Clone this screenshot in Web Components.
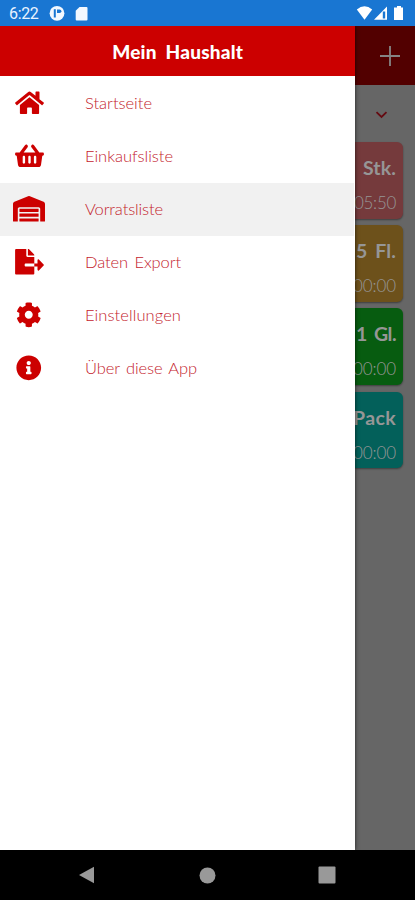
<!DOCTYPE html>
<html lang="de"><head><meta charset="utf-8"><title>Mein Haushalt</title>
<style>html,body{margin:0;height:100%;overflow:hidden}</style></head><body>
<phone-screen></phone-screen>
<script>
const define=(name,html,after)=>customElements.define(name,class extends HTMLElement{
  connectedCallback(){
    if(this.shadowRoot)return;
    const t=document.createElement('template');
    t.innerHTML=typeof html==='function'?html(this):html;
    this.attachShadow({mode:'open'}).append(t.content.cloneNode(true));
    if(after)after(this);
  }
});
const ICONS={
home:['0 0 576 512',29,'M280.37 148.26L96 300.11V464a16 16 0 0 0 16 16l112.06-.29a16 16 0 0 0 15.92-16V368a16 16 0 0 1 16-16h64a16 16 0 0 1 16 16v95.64a16 16 0 0 0 16 16.05L464 480a16 16 0 0 0 16-16V300L295.67 148.26a12.19 12.19 0 0 0-15.3 0zM571.6 251.47L488 182.56V44.05a12 12 0 0 0-12-12h-56a12 12 0 0 0-12 12v72.61L318.47 43a48 48 0 0 0-61 0L4.34 251.47a12 12 0 0 0-1.6 16.9l25.5 31A12 12 0 0 0 45.15 301l235.22-193.74a12.19 12.19 0 0 1 15.3 0L530.9 301a12 12 0 0 0 16.9-1.6l25.5-31a12 12 0 0 0-1.7-16.93z'],
basket:['0 0 576 512',29,'M576 216v16c0 13.255-10.745 24-24 24h-8l-26.113 182.788C514.509 462.435 494.257 480 470.37 480H105.63c-23.887 0-44.139-17.565-47.518-41.212L32 256h-8c-13.255 0-24-10.745-24-24v-16c0-13.255 10.745-24 24-24h67.341l106.78-146.821c10.395-14.292 30.407-17.453 44.701-7.058 14.293 10.395 17.453 30.408 7.058 44.701L170.477 192h235.046L326.12 82.821c-10.395-14.292-7.234-34.306 7.059-44.701 14.291-10.395 34.306-7.235 44.701 7.058L484.659 192H552c13.255 0 24 10.745 24 24zM312 392V280c0-13.255-10.745-24-24-24s-24 10.745-24 24v112c0 13.255 10.745 24 24 24s24-10.745 24-24zm112 0V280c0-13.255-10.745-24-24-24s-24 10.745-24 24v112c0 13.255 10.745 24 24 24s24-10.745 24-24zm-224 0V280c0-13.255-10.745-24-24-24s-24 10.745-24 24v112c0 13.255 10.745 24 24 24s24-10.745 24-24z'],
warehouse:['0 0 640 512',32,'M504 352H136.4c-4.4 0-8 3.6-8 8l-.1 48c0 4.4 3.6 8 8 8H504c4.4 0 8-3.6 8-8v-48c0-4.4-3.6-8-8-8zm0 96H136.1c-4.4 0-8 3.6-8 8l-.1 48c0 4.4 3.6 8 8 8h368c4.4 0 8-3.6 8-8v-48c0-4.4-3.6-8-8-8zm0-192H136.6c-4.4 0-8 3.6-8 8l-.1 48c0 4.4 3.6 8 8 8H504c4.4 0 8-3.6 8-8v-48c0-4.4-3.6-8-8-8zm106.5-139L338.4 3.7a48.15 48.15 0 0 0-36.9 0L29.5 117C11.7 124.5 0 141.9 0 161.3V504c0 4.4 3.6 8 8 8h80c4.4 0 8-3.6 8-8V256c0-17.6 14.6-32 32.6-32h382.8c18 0 32.6 14.4 32.6 32v248c0 4.4 3.6 8 8 8h80c4.4 0 8-3.6 8-8V161.3c0-19.4-11.7-36.8-29.5-44.3z'],
export:['0 0 576 512',29,'M384 121.9c0-6.3-2.5-12.4-7-16.9L279.1 7c-4.5-4.5-10.6-7-17-7H256v128h128zM571 308l-95.7-96.4c-10.1-10.1-27.4-3-27.4 11.3V288h-64v64h64v65.2c0 14.3 17.3 21.4 27.4 11.3L571 332c6.6-6.6 6.6-17.4 0-24zm-379 28v-32c0-8.8 7.2-16 16-16h176V160H248c-13.2 0-24-10.8-24-24V0H24C10.7 0 0 10.7 0 24v464c0 13.3 10.7 24 24 24h336c13.3 0 24-10.7 24-24V352H208c-8.8 0-16-7.2-16-16z'],
cog:['0 0 512 512',25.5,'M487.4 315.7l-42.6-24.6c4.3-23.2 4.3-47 0-70.2l42.6-24.6c4.9-2.8 7.1-8.6 5.5-14-11.1-35.6-30-67.8-54.7-94.6-3.8-4.1-10-5.1-14.8-2.3L380.8 110c-17.9-15.4-38.5-27.3-60.8-35.1V25.8c0-5.6-3.9-10.5-9.4-11.7-36.7-8.2-74.3-7.8-109.2 0-5.5 1.2-9.4 6.1-9.4 11.7V75c-22.2 7.9-42.8 19.8-60.8 35.1L88.7 85.5c-4.9-2.8-11-1.9-14.8 2.3-24.7 26.7-43.6 58.9-54.7 94.6-1.7 5.4.6 11.2 5.5 14L67.3 221c-4.3 23.2-4.3 47 0 70.2l-42.6 24.6c-4.9 2.8-7.1 8.6-5.5 14 11.1 35.6 30 67.8 54.7 94.6 3.8 4.1 10 5.1 14.8 2.3l42.6-24.6c17.9 15.4 38.5 27.3 60.8 35.1v49.2c0 5.6 3.9 10.5 9.4 11.7 36.7 8.2 74.3 7.8 109.2 0 5.5-1.2 9.4-6.1 9.4-11.7v-49.2c22.2-7.9 42.8-19.8 60.8-35.1l42.6 24.6c4.9 2.8 11 1.9 14.8-2.3 24.7-26.7 43.6-58.9 54.7-94.6 1.5-5.5-.7-11.3-5.6-14.1zM256 336c-44.1 0-80-35.9-80-80s35.9-80 80-80 80 35.9 80 80-35.9 80-80 80z'],
info:['0 0 512 512',25.5,'M256 8C119.043 8 8 119.083 8 256c0 136.997 111.043 248 248 248s248-111.003 248-248C504 119.083 392.957 8 256 8zm0 110c23.196 0 42 18.804 42 42s-18.804 42-42 42-42-18.804-42-42 18.804-42 42-42zm56 254c0 6.627-5.373 12-12 12h-88c-6.627 0-12-5.373-12-12v-24c0-6.627 5.373-12 12-12h12v-64h-12c-6.627 0-12-5.373-12-12v-24c0-6.627 5.373-12 12-12h64c6.627 0 12 5.373 12 12v100h12c6.627 0 12 5.373 12 12v24z']
};
/* Text run tracked out to a given width */
define('fit-text',`<style>:host{display:inline-block;white-space:pre}</style><span><slot></slot></span>`,el=>{
  const s=el.shadowRoot.querySelector('span'),w=+el.getAttribute('width'),n=el.textContent.length;
  s.style.letterSpacing=((w-s.getBoundingClientRect().width)/n)+'px';
});
define('status-bar',`<style>
:host{display:flex;align-items:center;height:26px;box-sizing:border-box;background:#1976d2;color:#e9f3ff;font:400 16px/26px Roboto,sans-serif;padding:0 11px 0 9px}
fit-text{width:29px;padding-top:2px}
svg{display:block}.r{margin-left:11px}.s{margin-left:9.5px}.w{margin-left:auto}
</style><fit-text width="29.5">6:22</fit-text>
<svg class="r" width="16" height="16" viewBox="0 0 16 16"><circle cx="8" cy="8.3" r="7.4" fill="#f2f8ff"/><path d="M5.8 4.2v8.3" fill="none" stroke="#1976d2" stroke-width="2"/><path d="M8 4.4h2.6a1.6 1.6 0 0 1 0 3.6H8z" fill="#1976d2"/></svg>
<svg class="s" width="13" height="15" viewBox="0 0 13 15"><path d="M4.5 1H11.5Q12.5 1 12.5 2V13.5Q12.5 14.5 11.5 14.5H1.7Q.7 14.5 .7 13.5V4.8z" fill="#f2f8ff"/></svg>
<svg class="w" width="48" height="16" viewBox="0 0 48 16"><path d="M.8 4.5Q8.5-1.8 16.2 4.5L8.5 14.8z" fill="#fff"/><path d="M18 14.7L31 1.5V14.7z" fill="#fff"/><path d="M26.8 6.5H29.2V13.5H26.8z" fill="#1976d2"/><path d="M41 1h4v1.5h2V15H38V2.5h3z" fill="#fff"/></svg>`);
define('menu-row',el=>{const[v,w,d]=ICONS[el.getAttribute('icon')];return`<style>
:host{display:grid;grid-template-columns:58px 1fr;align-items:center;height:53px;box-sizing:border-box;padding-bottom:1px;color:#c00;font:300 16.5px/24px Lato,sans-serif;column-gap:27px}
:host([active]){background:#f1f1f1;margin-right:1px}
svg{display:block;justify-self:center;fill:#c00}.t{color:#c4232d;word-spacing:2px;padding-bottom:1px}
</style><svg width="${w}" height="25.6" viewBox="${v}"><path d="${d}"/></svg><div class="t"><fit-text width="${el.getAttribute('fit')}">${el.getAttribute('label')}</fit-text></div>`});
define('side-drawer',`<style>
:host{display:block;box-sizing:border-box;background:#fff;box-shadow:0 0 4px rgba(0,0,0,.7);z-index:1}
header{height:50px;margin-bottom:1px;background:#c00;color:#fff;display:flex;justify-content:center;font:900 19px/51px Lato,sans-serif;word-spacing:4px}
</style><header><fit-text width="131">Mein Haushalt</fit-text></header><nav>
<menu-row icon="home" label="Startseite" fit="67"></menu-row>
<menu-row icon="basket" label="Einkaufsliste" fit="88"></menu-row>
<menu-row icon="warehouse" label="Vorratsliste" fit="78" active></menu-row>
<menu-row icon="export" label="Daten Export" fit="96"></menu-row>
<menu-row icon="cog" label="Einstellungen" fit="96"></menu-row>
<menu-row icon="info" label="Über diese App" fit="112"></menu-row></nav>`);
define('stock-card',el=>`<style>
:host{display:flex;flex-direction:column;align-items:flex-end;box-sizing:border-box;height:76.5px;border-radius:6px;background:${el.getAttribute('color')};box-shadow:0 1px 2px rgba(0,0,0,.4);padding:11px 6.5px 0 0;color:#969696;white-space:nowrap}
b{font:700 19.5px/30px Lato,sans-serif;height:35px;word-spacing:3px}
span{font:300 17px/30px Lato,sans-serif}
</style><b><fit-text width="${el.getAttribute('aw')}">${el.getAttribute('amount')}</fit-text></b><span><fit-text width="${el.getAttribute('tw')}">${el.getAttribute('time')}</fit-text></span>`);
/* Page behind the drawer, in its dimmed colours */
define('dimmed-page',`<style>
:host{display:block;background:#666;overflow:hidden}
header{height:59px;background:#520000;display:flex;align-items:center;justify-content:flex-end;padding-right:15px}
.f{height:57px;box-sizing:border-box;padding:3px 27px 0 0;display:flex;align-items:center;justify-content:flex-end}
main{display:grid;gap:6.7px;padding:0 12.5px}
svg{display:block}
</style><header><svg width="20" height="20"><path d="M10 0V20M0 10H20" stroke="#858585" stroke-width="1.8"/></svg></header>
<div class="f"><svg width="13" height="8"><path d="M1.5 1.2L6.5 6L11.5 1.2" fill="none" stroke="#650b12" stroke-width="1.8"/></svg></div>
<main><stock-card color="#753a3c" amount="Stk." aw="33" time="05:50" tw="42"></stock-card>
<stock-card color="#6d511b" amount="5 Fl." aw="40" time="00:00" tw="43"></stock-card>
<stock-card color="#075c10" amount="1 Gl." aw="40" time="00:00" tw="43"></stock-card>
<stock-card color="#03605a" amount="Pack" aw="43" time="00:00" tw="43"></stock-card></main>`);
define('nav-bar',`<style>
:host{display:grid;grid-template-columns:repeat(3,119.6px);justify-content:start;padding-left:28px;align-items:center;justify-items:center;background:#000}
svg{display:block;fill:#999}
</style><svg width="17" height="18"><path d="M0 9L15 .7V17.3z"/></svg><svg width="17" height="17"><circle cx="8.5" cy="8.5" r="8"/></svg><svg width="18" height="18"><rect x=".5" y=".5" width="17" height="17" rx="1"/></svg>`);
define('phone-screen',`<style>
:host{display:grid;grid-template-rows:26px 824px 50px;width:415px;height:900px;overflow:hidden}
section{display:grid;grid-template-columns:355.4px 1fr;overflow:hidden}
side-drawer{grid-area:1/1}dimmed-page{grid-area:1/1/2/3}
</style><status-bar></status-bar><section><dimmed-page></dimmed-page><side-drawer></side-drawer></section><nav-bar></nav-bar>`);
</script></body></html>
